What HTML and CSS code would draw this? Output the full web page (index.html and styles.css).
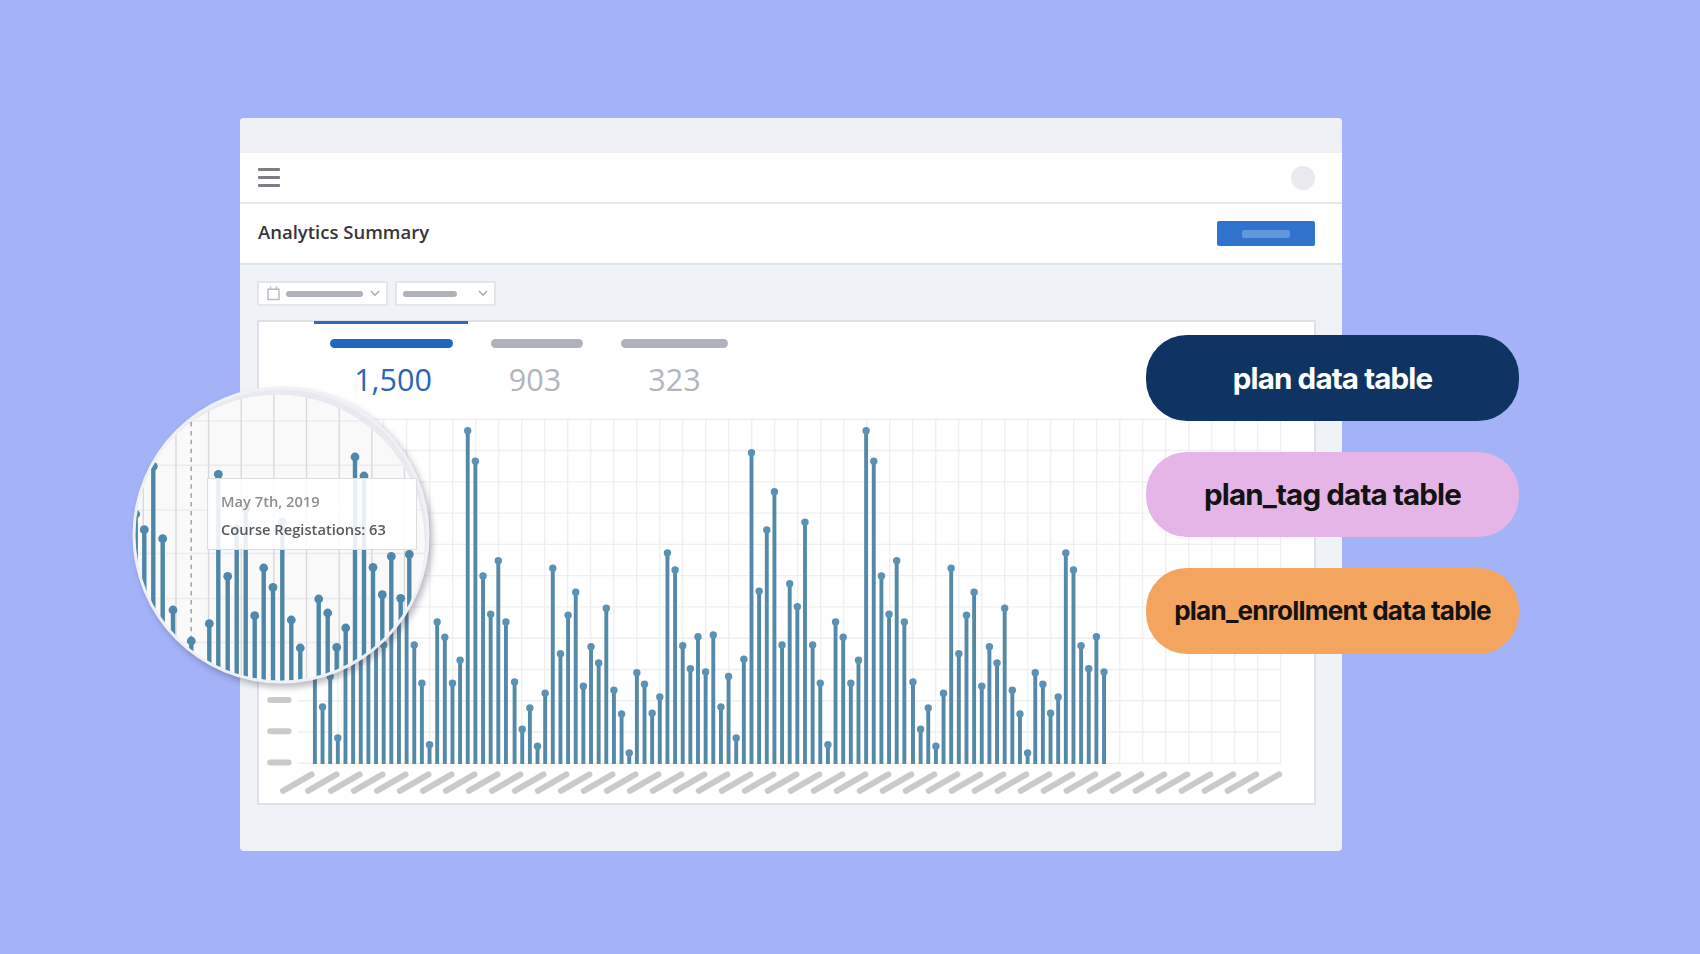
FILE: index.html
```html
<!DOCTYPE html>
<html lang="en">
<head>
    <meta charset="UTF-8">
    <meta name="viewport" content="width=device-width, initial-scale=1.0">
    <title>Analytics Summary</title>
    <link rel="stylesheet" href="styles.css">
</head>
<body>
    <div class="window">
        <div class="titlebar"></div>

        <header class="topbar">
            <div class="menu-icon"><span></span><span></span><span></span></div>
            <div class="avatar"></div>
        </header>

        <div class="page-head">
            <h1>Analytics Summary</h1>
            <div class="btn"><span></span></div>
        </div>

        <main>
            <div class="filters">
                <div class="select select-date">
                    <svg width="13" height="15" viewBox="0 0 13 15" fill="none" stroke="#b9bac1" stroke-width="1.4">
                        <path d="M1 3.2h11v10.3H1zM3.5 0.5v3M9.5 0.5v3"/>
                    </svg>
                    <span class="line"></span>
                    <svg class="chevron" width="10" height="7" viewBox="0 0 10 7" fill="none" stroke="#a5a9b0" stroke-width="1.4">
                        <path d="M1 1l4 4.2L9 1"/>
                    </svg>
                </div>
                <div class="select select-type">
                    <span class="line"></span>
                    <svg class="chevron" width="10" height="7" viewBox="0 0 10 7" fill="none" stroke="#a5a9b0" stroke-width="1.4">
                        <path d="M1 1l4 4.2L9 1"/>
                    </svg>
                </div>
            </div>

            <div class="card">
                <div class="tabs">
                    <div class="tab tab-active"><span></span><b>1,500</b></div>
                    <div class="tab tab-second"><span></span><b>903</b></div>
                    <div class="tab tab-third"><span></span><b>323</b></div>
                </div>
                <svg id="chart" width="1054" height="393" viewBox="259 408 1054 393"></svg>
            </div>
        </main>
    </div>

    <div class="lens">
        <svg id="lens-chart" width="298" height="298" viewBox="132 386 298 298"></svg>
        <div class="tooltip">
            <p class="tooltip-date">May 7th, 2019</p>
            <p class="tooltip-value">Course Registations: 63</p>
        </div>
    </div>

    <div class="pills">
        <div class="pill pill-plan">plan data table</div>
        <div class="pill pill-tag">plan_tag data table</div>
        <div class="pill pill-enrollment">plan_enrollment data table</div>
    </div>

    <script>
        // Top of each bar, the pattern repeats after 52 bars
        const tops = [
            635, 707, 676.5, 738, 659.3, 452.7, 591.3, 530, 491.7, 645, 583.7, 606.7, 522.3,
            645, 683.3, 744.7, 622, 637.3, 683.3, 660.3, 430.7, 461.3, 576, 614.3, 560.7, 622,
            682, 729.3, 708, 746.3, 693.3, 568.3, 653.7, 615.3, 592.3, 686.3, 646.7, 663, 608.3,
            690.3, 714, 753, 672.7, 684.3, 713.3, 697, 553, 570, 645.7, 668.7, 636.7, 672
        ];

        // Bars under the magnifier [x, top]
        const lensBars = [
            [135.7, 514], [144.3, 529.7], [153.3, 466.3], [162.7, 538.7], [173, 610], [191.3, 641],
            [209.3, 623.7], [218.3, 474.3], [227.7, 576.3], [236.7, 529], [245.7, 509], [254.7, 615.7],
            [263.7, 568], [273, 587.3], [282.3, 522], [291.3, 620], [300.3, 648], [318.7, 599],
            [327.7, 613], [336.7, 647.3], [345.7, 628], [355, 457], [364, 476], [373, 567.3],
            [382.3, 594.7], [391.3, 556.3], [400.7, 598.3], [409.3, 554.3]
        ];

        function line(x1, y1, x2, y2, cls) {
            return `<line x1="${x1}" y1="${y1}" x2="${x2}" y2="${y2}" class="${cls}"/>`;
        }

        function drawChart() {
            let out = '';
            for (let i = 0; i < 12; i++) {
                const y = 419.3 + i * 31.27;
                out += line(298, y, 1281, y, 'grid');
            }
            for (let i = 0; i < 43; i++) {
                const x = 314.7 + i * 23;
                out += line(x, 419, x, 763.5, 'grid');
            }
            for (let i = 0; i < 104; i++) {
                const x = 314.9 + i * 7.642 + (i > 25 ? 1 : 0) + (i > 77 ? 1 : 0);
                const y = tops[i % 52];
                out += line(x, y, x, 764, 'bar');
                out += `<circle cx="${x}" cy="${y}" r="3.7" class="dot"/>`;
            }
            // placeholder labels
            [700, 731.2, 762.6].forEach(y => {
                out += line(270.2, y, 288.6, y, 'label');
            });
            for (let i = 0; i < 43; i++) {
                const x = i === 0 ? 283 : 285 + i * 22.99;
                out += line(x, 790.8, x + 28.6, 774.4, 'label');
            }
            document.getElementById('chart').innerHTML = out;
        }

        function drawLens() {
            let out = '<defs><clipPath id="glass"><circle cx="281" cy="535" r="145.5"/></clipPath>';
            out += '<clipPath id="paper"><circle cx="277" cy="542.5" r="148"/></clipPath></defs>';
            out += '<circle cx="281" cy="535" r="148.5" fill="#f0f1f7"/>';
            out += '<g clip-path="url(#glass)">';
            out += '<circle cx="281" cy="535" r="146" fill="#e9eaf0"/>';
            out += '<g clip-path="url(#paper)">';
            out += '<circle cx="277" cy="542.5" r="148" fill="#f9f9fa"/>';
            [421, 465.3, 510, 553.5, 598.5, 642.5].forEach(y => {
                out += line(130, y, 424, y, 'lens-row');
            });
            for (let i = 0; i < 9; i++) {
                const x = 143.3 + i * 32.65;
                out += line(x, 390, x, 690, 'lens-col');
            }
            out += '</g>';
            out += line(191.2, 422, 191.2, 640, 'dash');
            lensBars.forEach(([x, y]) => {
                out += line(x, y, x, 690, 'lens-bar');
                out += `<circle cx="${x}" cy="${y}" r="4.4" class="lens-dot"/>`;
            });
            out += '</g>';
            document.getElementById('lens-chart').innerHTML = out;
        }

        drawChart();
        drawLens();
    </script>
</body>
</html>
```

FILE: styles.css
```css
* {
    margin: 0;
    padding: 0;
    box-sizing: border-box;
}

body {
    position: relative;
    width: 1700px;
    height: 954px;
    overflow: hidden;
    padding: 118px 0 0 240px;
    background-color: #a4b2f8;
    font-family: 'Open Sans', 'Noto Sans', sans-serif;
}

/* Browser window */
.window {
    display: flex;
    flex-direction: column;
    width: 1102px;
    height: 733px;
    border-radius: 4px;
    background-color: #eff3f7;
    overflow: hidden;
}

.titlebar {
    height: 35px;
    background-color: #eef0f5;
}

.topbar {
    display: flex;
    align-items: center;
    justify-content: space-between;
    height: 51px;
    padding: 0 27px 0 18px;
    background-color: #fff;
    border-bottom: 2px solid #e6e7ea;
}

.menu-icon {
    display: flex;
    flex-direction: column;
    gap: 4.7px;
}

.menu-icon span {
    width: 22px;
    height: 3px;
    border-radius: 1px;
    background-color: #7b7c85;
}

.avatar {
    width: 24px;
    height: 24px;
    border-radius: 50%;
    background-color: #e9e9ee;
}

.page-head {
    display: flex;
    align-items: center;
    justify-content: space-between;
    height: 61px;
    padding: 0 27px 0 18px;
    background-color: #fff;
    border-bottom: 2px solid #dfe3e8;
}

.page-head h1 {
    padding-bottom: 4px;
    font-size: 18.5px;
    font-weight: 600;
    color: #35353a;
}

.btn {
    display: flex;
    align-items: center;
    justify-content: center;
    width: 98px;
    height: 25px;
    border-radius: 2px;
    background-color: #3073cd;
}

.btn span {
    width: 48px;
    height: 8px;
    border-radius: 2px;
    background-color: #6297dd;
}

main {
    padding: 16px 26px 0 17px;
}

.filters {
    display: flex;
    gap: 7px;
    margin-bottom: 14px;
}

.select {
    display: flex;
    align-items: center;
    height: 25px;
    padding: 0 6px 0 8px;
    border: 2px solid #e2e5ea;
    background-color: #fff;
}

.select-date {
    width: 131px;
}

.select-type {
    width: 101px;
    padding: 0 6px;
}

.select .line {
    height: 6px;
    border-radius: 3px;
    background-color: #b0b2ba;
}

.select-date .line {
    width: 77px;
    margin-left: 6px;
}

.select-type .line {
    width: 54px;
}

.chevron {
    margin-left: auto;
}

.card {
    width: 1059px;
    height: 485px;
    border: 2px solid #dee1e7;
    background-color: #fff;
}

/* Summary tabs */
.tabs {
    display: flex;
    height: 87px;
    margin-top: -1px;
    padding-left: 55px;
}

.tab {
    display: flex;
    flex-direction: column;
    align-items: center;
    padding-top: 15px;
    border-top: 3px solid transparent;
}

.tab span {
    height: 9px;
    border-radius: 5px;
    background-color: #b0b2bb;
}

.tab b {
    margin-top: 10px;
    font-size: 30.5px;
    font-weight: 400;
    line-height: 42px;
    color: #b3b5bc;
}

.tab-active {
    width: 154px;
    border-top-color: #2f6bb2;
}

.tab-active span {
    width: 123px;
    background-color: #2366c2;
}

.tab-active b {
    margin-left: 4px;
    color: #2a66b4;
}

.tab-second {
    margin-left: 23px;
}

.tab-second span {
    width: 92px;
}

.tab-second b {
    margin-right: 4px;
}

.tab-third {
    margin-left: 38px;
}

.tab-third span {
    width: 107px;
}

#chart {
    display: block;
}

.grid {
    stroke: #efeff1;
    stroke-width: 1.4;
}

.bar {
    stroke: #5589a8;
    stroke-width: 3.9;
}

.dot {
    fill: #5b92b4;
}

.label {
    stroke: #cacaca;
    stroke-width: 6;
    stroke-linecap: round;
}

/* Magnifier */
.lens {
    position: absolute;
    left: 132px;
    top: 386px;
    width: 298px;
    height: 298px;
    border-radius: 50%;
    filter: drop-shadow(3px 4px 3px rgba(60, 60, 80, 0.35));
}

.lens-row {
    stroke: #ececef;
    stroke-width: 1.4;
}

.lens-col {
    stroke: #d9d9dd;
    stroke-width: 1.4;
}

.dash {
    stroke: #a3a3a6;
    stroke-width: 1.5;
    stroke-dasharray: 4.5 4.4;
}

.lens-bar {
    stroke: #4f86a5;
    stroke-width: 4.4;
}

.lens-dot {
    fill: #4f88aa;
}

.tooltip {
    position: absolute;
    left: 75px;
    top: 92px;
    width: 210px;
    height: 72px;
    padding: 12px 0 0 13px;
    border: 1px solid #dddde0;
    background-color: rgba(255, 255, 255, 0.88);
    font-size: 14.7px;
    font-weight: 600;
    line-height: 28.3px;
    white-space: nowrap;
}

.tooltip p {
    margin-top: -4px;
    margin-bottom: 4px;
}

.tooltip-date {
    color: #8e8e90;
}

.tooltip-value {
    color: #5a5a5c;
}

/* Table names */
.pills {
    position: absolute;
    left: 1146px;
    top: 335px;
    display: flex;
    flex-direction: column;
    gap: 31px;
}

.pill {
    display: flex;
    align-items: center;
    justify-content: center;
    width: 373px;
    height: 85.5px;
    border-radius: 41px;
    font-family: Inter, sans-serif;
    font-size: 29.6px;
    font-weight: 700;
    letter-spacing: -0.03em;
    color: #131313;
}

.pill-plan {
    padding-top: 1px;
    background-color: #0f3463;
    color: #fff;
}

.pill-tag {
    padding-bottom: 1px;
    background-color: #e5b5e8;
}

.pill-enrollment {
    padding-bottom: 1px;
    background-color: #f3a55f;
    font-size: 26.1px;
}
```
